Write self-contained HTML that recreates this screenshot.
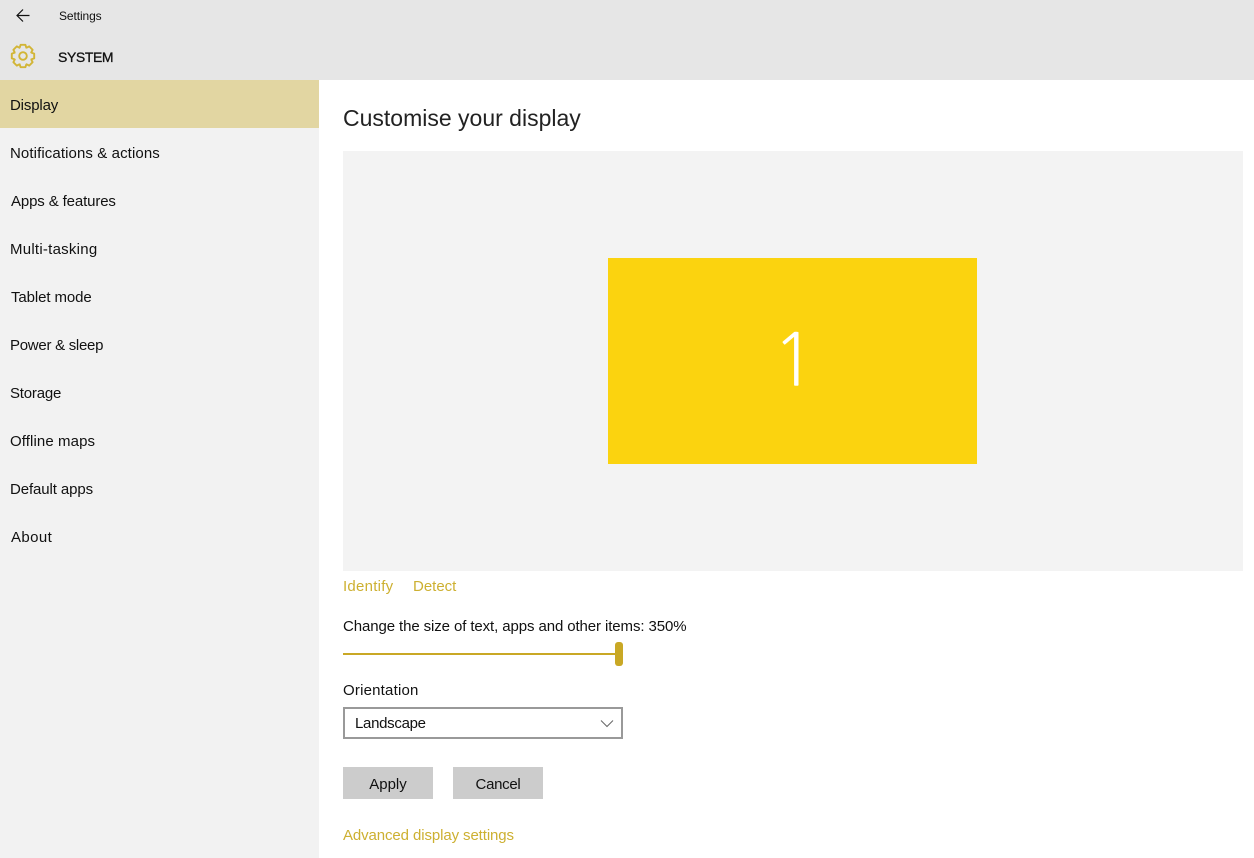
<!DOCTYPE html>
<html lang="en">
<head>
<meta charset="utf-8">
<title>Settings</title>
<style>
html,body{margin:0;padding:0;width:1254px;height:858px;overflow:hidden;background:#fff}
body{position:relative;font-family:"Liberation Sans",sans-serif;font-size:15px;color:#111}
.a{position:absolute;white-space:nowrap;line-height:20px}
.gold{color:#cdb031}
#top{left:0;top:0;width:1254px;height:80px;background:#e6e6e6}
#side{left:0;top:80px;width:319px;height:778px;background:#f2f2f2}
#sel{left:0;top:80px;width:319px;height:48px;background:#e2d6a2}
#prev{left:343px;top:151px;width:900px;height:420px;background:#f3f3f3}
#mon{left:608px;top:258px;width:369px;height:206px;background:#fbd30f}
.btn{top:767px;height:32px;width:90px;background:#ccc;text-align:center;line-height:35px}
</style>
</head>
<body>
<div class="a" id="top"></div>
<div class="a" id="side"></div>
<div class="a" id="sel"></div>

<svg class="a" style="left:15px;top:8px" width="16" height="16" viewBox="0 0 16 16" fill="none" stroke="#111" stroke-width="1.2"><path d="M2 7.5H14.5M8 1.5L2 7.5L8 13.5"/></svg>
<div class="a" style="left:59px;top:6px;font-size:12px;letter-spacing:-.1px">Settings</div>

<svg class="a" style="left:10px;top:43px" width="26" height="26" viewBox="-13 -13 26 26" fill="none" stroke="#d2b536" stroke-width="1.9" stroke-linejoin="round">
<circle r="3.8"/>
<g><path d="M-3.4 -8.2L-2.4 -11.2H2.4L3.4 -8.2L3.48 -8.2"/></g>
<g transform="rotate(45)"><path d="M-3.4 -8.2L-2.4 -11.2H2.4L3.4 -8.2L3.48 -8.2"/></g>
<g transform="rotate(90)"><path d="M-3.4 -8.2L-2.4 -11.2H2.4L3.4 -8.2L3.48 -8.2"/></g>
<g transform="rotate(135)"><path d="M-3.4 -8.2L-2.4 -11.2H2.4L3.4 -8.2L3.48 -8.2"/></g>
<g transform="rotate(180)"><path d="M-3.4 -8.2L-2.4 -11.2H2.4L3.4 -8.2L3.48 -8.2"/></g>
<g transform="rotate(225)"><path d="M-3.4 -8.2L-2.4 -11.2H2.4L3.4 -8.2L3.48 -8.2"/></g>
<g transform="rotate(270)"><path d="M-3.4 -8.2L-2.4 -11.2H2.4L3.4 -8.2L3.48 -8.2"/></g>
<g transform="rotate(315)"><path d="M-3.4 -8.2L-2.4 -11.2H2.4L3.4 -8.2L3.48 -8.2"/></g>
</svg>
<div class="a" style="left:58px;top:47px;font-size:14px;letter-spacing:-.4px;-webkit-text-stroke:.3px #111">SYSTEM</div>

<div class="a" style="left:10px;top:96px;letter-spacing:-.15px">Display</div>
<div class="a" style="left:10px;top:144px;letter-spacing:.1px">Notifications &amp; actions</div>
<div class="a" style="left:11px;top:192px;letter-spacing:-.13px">Apps &amp; features</div>
<div class="a" style="left:10px;top:240px;letter-spacing:.25px">Multi-tasking</div>
<div class="a" style="left:11px;top:288px;letter-spacing:-.1px">Tablet mode</div>
<div class="a" style="left:10px;top:336px;letter-spacing:-.27px">Power &amp; sleep</div>
<div class="a" style="left:10px;top:384px;letter-spacing:-.2px">Storage</div>
<div class="a" style="left:10px;top:432px;letter-spacing:.1px">Offline maps</div>
<div class="a" style="left:10px;top:480px;letter-spacing:-.1px">Default apps</div>
<div class="a" style="left:11px;top:528px;letter-spacing:.4px">About</div>

<div class="a" style="left:343px;top:104px;font-size:23px;line-height:28px;color:#222">Customise your display</div>
<div class="a" id="prev"></div>
<div class="a" id="mon"></div>
<div class="a" style="left:769px;top:313px;width:50px;text-align:center;color:#fff;font-family:'NanumGothic',sans-serif;font-size:73px;line-height:96px;-webkit-text-stroke:.6px #fbd30f">1</div>

<div class="a gold" style="left:343px;top:577px;letter-spacing:.25px">Identify</div>
<div class="a gold" style="left:413px;top:577px">Detect</div>

<div class="a" style="left:343px;top:617px;letter-spacing:-.1px">Change the size of text, apps and other items: 350%</div>
<div class="a" style="left:343px;top:653px;width:274px;height:2px;background:#c9a825"></div>
<div class="a" style="left:615px;top:642px;width:8px;height:24px;border-radius:3px;background:#c9a825"></div>

<div class="a" style="left:343px;top:681px;letter-spacing:.2px">Orientation</div>
<div class="a" style="left:343px;top:707px;width:276px;height:28px;border:2px solid #999;background:#fff"></div>
<div class="a" style="left:355px;top:714px;letter-spacing:-.3px">Landscape</div>
<svg class="a" style="left:600px;top:719px" width="14" height="10" viewBox="0 0 14 10" fill="none" stroke="#666" stroke-width="1"><path d="M1 1.5L7 7.5L13 1.5"/></svg>

<div class="a btn" style="left:343px">Apply</div>
<div class="a btn" style="left:453px;letter-spacing:-.3px">Cancel</div>

<div class="a gold" style="left:343px;top:826px;letter-spacing:-.1px">Advanced display settings</div>
</body>
</html>
